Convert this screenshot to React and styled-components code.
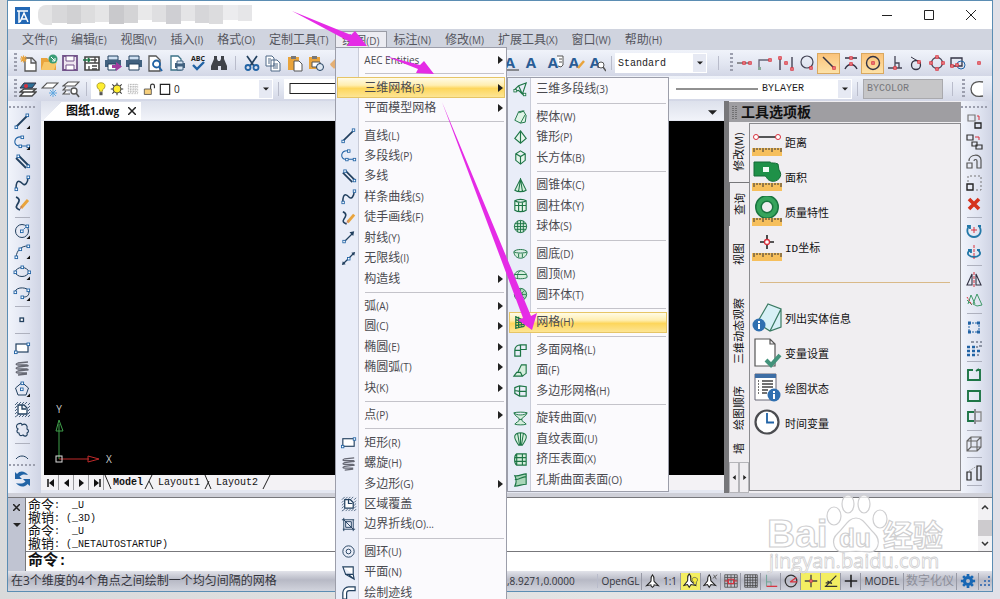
import styled, { createGlobalStyle, css } from "styled-components";

const GlobalStyle = createGlobalStyle`
  * {
    box-sizing: border-box;
  }

  body {
    margin: 0;
    overflow: hidden;
    background: #dcdee2;
    font-family: "Open Sans", "Noto Sans CJK SC", sans-serif;
    font-size: 12px;
    color: #4a4a50;
  }

  button,
  select,
  input {
    font: inherit;
    color: inherit;
    margin: 0;
    padding: 0;
    border: 0;
    background: none;
    border-radius: 0;
  }

  svg {
    display: block;
  }
`;

const mono = '"Liberation Mono", "Noto Sans CJK SC", monospace';
const bar = "linear-gradient(#f0f3fa, #e3e7f2 50%, #d3d7e6)";

const Page = styled.div`
  position: relative;
  height: 100vh;
  overflow: hidden;
  padding: 0 7px 7px;
  background: linear-gradient(90deg, #d9dadb, #e3e4e4 60%, #e1e1e8);
`;

const Window = styled.main`
  display: flex;
  flex-direction: column;
  height: 100%;
  border: 1px solid #5b8db3;
  background: #e4e7f1;
`;

/* title bar */

const TitleBar = styled.header`
  display: flex;
  align-items: center;
  height: 28px;
  flex: none;
  padding-left: 7px;
  background: #fff;
`;

const Mosaic = styled.div`
  display: flex;
  height: 20px;
  width: 214px;
  margin-left: 8px;
  border-radius: 8px 0 0 8px;
  overflow: hidden;
`;

const MosaicCell = styled.span`
  flex: 1;
  height: ${(p) => p.$h}px;
  background: ${(p) => p.$tone};
`;

const WindowButtons = styled.div`
  display: flex;
  margin-left: auto;
`;

const WindowButton = styled.button`
  display: grid;
  place-items: center;
  width: 42px;
  height: 28px;
`;

/* menu bar */

const MenuBar = styled.nav`
  display: flex;
  height: 21px;
  flex: none;
  padding: 2px 0 0 7px;
  background: #d0d4df;
`;

const MenuSlot = styled.div`
  position: relative;
`;

const MenuTitle = styled.button`
  display: block;
  height: 18px;
  padding: 0 7px;
  line-height: 16px;
  white-space: nowrap;
  color: #55565e;

  ${(p) =>
    p.$open &&
    css`
      padding: 0 6px;
      border: 1px solid #9a9ca6;
      border-bottom: 0;
      background: #ececf2;
      line-height: 13px;
    `}
`;

const Key = styled.span`
  font-size: 10px;
`;

const Menu = styled.div`
  position: absolute;
  z-index: 10;
  top: ${(p) => p.$top}px;
  left: ${(p) => p.$left}px;
  width: ${(p) => p.$width}px;
  height: ${(p) => p.$height}px;
  display: flex;
  flex-direction: column;
  padding: ${(p) => p.$pad}px 1px 1px;
  border: 1px solid #9c9eaa;
  background: linear-gradient(90deg, #e9edf8 22px, #c9ccd8 22px, #c9ccd8 23px, #fbfafd 23px);
`;

const MenuRow = styled.button`
  flex: 1 1 0;
  min-height: 0;
  display: flex;
  align-items: center;
  width: 100%;
  text-align: left;
  white-space: nowrap;
  line-height: 16px;
  border: 1px solid transparent;

  ${(p) =>
    p.$active &&
    css`
      border-color: #e6c566;
      background: linear-gradient(#fffbe6, #ffeeb0 38%, #fdd65c 55%, #fde594);
    `}
`;

const MenuIcon = styled.span`
  display: grid;
  place-items: center;
  flex: none;
  width: 20px;
  margin-right: 6px;
`;

const MenuLabel = styled.span`
  flex: 1;
`;

const MenuLine = styled.hr`
  flex: none;
  align-self: stretch;
  height: 1px;
  margin: 3px 1px 3px 28px;
  border: 0;
  background: #c4c3ca;
`;

/* tool bars */

const ToolBar = styled.div`
  display: flex;
  align-items: center;
  flex: none;
  height: ${(p) => p.$height}px;
  padding: 0 3px 0 6px;
  background: ${bar};
`;

const Grip = styled.span`
  flex: none;
  width: 3px;
  height: 20px;
  background: repeating-linear-gradient(#9c9fae 0 2px, transparent 2px 4px);
`;

const GripTop = styled.span`
  flex: none;
  width: 26px;
  height: 2px;
  margin: 5px 0 3px;
  background: repeating-linear-gradient(90deg, #9c9fae 0 2px, transparent 2px 4px);
`;

const IconGroup = styled.div`
  display: flex;
  flex: none;
  width: ${(p) => p.$width}px;
  height: 21px;
`;

const ToolButton = styled.button`
  display: grid;
  place-items: center;
  flex: 1 1 0;
  min-width: 0;
  min-height: 0;
  overflow: hidden;

  ${(p) =>
    p.$active &&
    css`
      border: 1px solid #d9a860;
      background: linear-gradient(#fbc37a, #fde2a8);
    `}
`;

const Divider = styled.span`
  flex: none;
  width: 1px;
  height: 14px;
  margin: 0 ${(p) => p.$gap || 5}px;
  background: #b9bccb;
`;

const Spacer = styled.span`
  flex: 1;
`;

const Combo = styled.div`
  display: flex;
  align-items: center;
  flex: none;
  height: 20px;
  width: ${(p) => p.$width}px;
  padding-left: 3px;
  gap: 2px;
  background: ${(p) => (p.$off ? "#c6c6c8" : "#fff")};
  border: ${(p) => (p.$off ? "1px solid #a9a9ad" : "0")};
  color: ${(p) => (p.$off ? "#77777b" : "#1c1c1c")};
`;

const Select = styled.select`
  appearance: none;
  flex: 1;
  min-width: 0;
  height: 18px;
  font-family: ${(p) => (p.$plain ? "inherit" : mono)};
  font-size: 10px;
  opacity: 1;
  outline: 0;
`;

const ComboArrow = styled.span`
  display: grid;
  place-items: center;
  width: 13px;
  height: 18px;
  margin-right: 1px;
  background: #e6e9f3;
`;

/* middle area */

const Work = styled.div`
  display: flex;
  flex: 1;
  min-height: 0;
`;

const SideBar = styled.div`
  display: flex;
  flex-direction: column;
  align-items: center;
  flex: none;
  width: ${(p) => p.$width}px;
  padding-bottom: 4px;
  padding-right: ${(p) => p.$right}px;
  background: linear-gradient(90deg, #f1f4fb, #dfe3f0 60%, #cfd4e4);
`;

const SideList = styled.div`
  display: flex;
  flex-direction: column;
  flex: ${(p) => (p.$fixed ? "none" : "1")};
  width: 22px;
  height: ${(p) => (p.$fixed ? "20px" : "auto")};
  min-height: 0;
`;

const SideLine = styled.hr`
  flex: none;
  width: 15px;
  height: 1px;
  margin: 3px auto;
  border: 0;
  background: #aeb1be;
`;

const Peek = styled.div`
  display: flex;
  flex: none;
  height: 12px;
  overflow: hidden;
`;

const Drawing = styled.section`
  display: flex;
  flex-direction: column;
  flex: 1;
  min-width: 0;
`;

const DocTabs = styled.div`
  display: flex;
  align-items: flex-end;
  justify-content: space-between;
  flex: none;
  height: 19px;
  padding: 0 5px 0 2px;
  background: linear-gradient(#dde1ec, #f1f3f9);
`;

const DocTab = styled.div`
  display: flex;
  align-items: center;
  gap: 6px;
  height: 18px;
  padding: 0 2px 0 23px;
  background: linear-gradient(#fff, #fff) 18px 0 / 100% 100% no-repeat,
    linear-gradient(to bottom right, transparent 50%, #fff 51%) 0 0 / 18px 100% no-repeat;
  font-weight: 700;
  color: #111;
  line-height: 16px;
`;

const DropButton = styled.button`
  display: grid;
  place-items: center;
  width: 14px;
  height: 16px;
`;

const Canvas = styled.div`
  flex: 1;
  display: flex;
  align-items: flex-end;
  min-height: 0;
  margin-top: 1px;
  padding: 0 0 5px 8px;
  border-left: 3px solid #f4f5f8;
  background: #000;
`;

const SheetBar = styled.div`
  display: flex;
  align-items: stretch;
  flex: none;
  height: 15px;
  margin-bottom: 3px;
  padding-left: 3px;
  background: #f3f2f5;
  font-family: ${mono};
  font-size: 10px;
  color: #111;
`;

const SheetNav = styled.button`
  display: grid;
  place-items: center;
  width: 15px;
  border-right: 1px solid #9b9b9f;
`;

const Sheet = styled.button`
  line-height: 14px;
  padding: 0 ${(p) => (p.$bold ? 1 : 2)}px;
  font-weight: ${(p) => (p.$bold ? 700 : 400)};
`;

/* tool palette */

const Palette = styled.aside`
  display: flex;
  flex-direction: column;
  flex: none;
  width: 237px;
  border-left: 5px solid #77777a;
  background: #f0eef1;
`;

const PaletteHead = styled.h2`
  display: flex;
  align-items: center;
  gap: 4px;
  flex: none;
  height: 20px;
  margin: 1px 0 0;
  padding-left: 3px;
  background: #9f9ea2;
  font-size: 14px;
  line-height: 18px;
  font-weight: 700;
  color: #111;
`;

const PaletteBody = styled.div`
  display: flex;
  flex: 1;
  min-height: 0;
`;

const TabColumn = styled.div`
  display: flex;
  flex-direction: column;
  flex: none;
  width: 20px;
`;

const SideTab = styled.button`
  flex: ${(p) => p.$grow} 1 0;
  min-height: 0;
  overflow: hidden;
  display: flex;
  align-items: center;
  justify-content: center;
  writing-mode: vertical-rl;
  text-orientation: sideways;
  transform: rotate(180deg);
  white-space: nowrap;
  font-size: 11px;
  line-height: 18px;
  color: #111;

  ${(p) =>
    p.$current &&
    css`
      border-right: 1px solid #77777a;
      border-bottom: 1px solid #77777a;
    `}
`;

const TabScroll = styled.div`
  display: flex;
  flex: none;
  height: 31px;
`;

const TabScrollButton = styled.button`
  display: grid;
  place-items: center;
  flex: 1;
  border: 1px solid #b5b5b9;
`;

const ToolList = styled.div`
  flex: 1;
  margin: 1px 0 2px;
  padding: 0 0 0 2px;
  border: 1px solid #8b8b8f;
`;

const ToolItem = styled.button`
  display: flex;
  align-items: center;
  gap: 2px;
  width: 100%;
  height: 35px;
  text-align: left;
  font-family: ${mono};
  font-size: 11px;
  color: #111;
`;

const ToolRule = styled.hr`
  height: 1px;
  margin: 18px 10px 17px 8px;
  border: 0;
  background: #d9b988;
`;

/* command line */

const Splitter = styled.div`
  flex: none;
  height: 5px;
  background: #cfd0d8;
  border-bottom: 1px solid #77777b;
`;

const Command = styled.section`
  display: flex;
  flex: none;
  height: 73px;
`;

const CommandSide = styled.div`
  display: flex;
  flex-direction: column;
  align-items: center;
  gap: 2px;
  width: 18px;
  padding-top: 1px;
  background: #c0c4d2;
  border-right: 1px solid #77777b;
`;

const CommandMain = styled.div`
  display: flex;
  flex-direction: column;
  flex: 1;
  background: #fff;
  color: #111;
`;

const History = styled.div`
  display: flex;
  justify-content: space-between;
  height: 54px;
  border-bottom: 1px solid #77777b;
`;

const Log = styled.div`
  padding: 1px 0 0 2px;
  font-family: ${mono};
  font-size: 10px;
`;

const LogLine = styled.div`
  display: flex;
  align-items: center;
  height: 13px;
  line-height: 13px;
  white-space: pre;
`;

const LogWord = styled.span`
  font-size: 13px;
`;

const ScrollTrack = styled.div`
  display: flex;
  flex-direction: column;
  align-items: center;
  justify-content: space-between;
  width: 14px;
  padding: 7px 0 5px;
  background: #f2f1f3;
`;

const Thumb = styled.span`
  width: 14px;
  height: 16px;
  margin-top: 4px;
  background: #cdcbce;
`;

const Prompt = styled.label`
  display: flex;
  align-items: center;
  flex: 1;
  padding-left: 2px;
  font-family: ${mono};
  font-size: 15px;
  line-height: 18px;
  font-weight: 700;
`;

const CommandInput = styled.input`
  flex: 1;
  height: 16px;
  margin-left: 4px;
  outline: 0;
`;

/* status bar */

const Status = styled.footer`
  display: flex;
  align-items: center;
  flex: none;
  height: 20px;
  padding-left: 3px;
  background: linear-gradient(#e2e3ea, #b7b9c5 45%, #d2d4dd);
  white-space: nowrap;
  line-height: 18px;
  color: #33343c;
`;

const StatusCell = styled.button`
  display: flex;
  align-items: center;
  justify-content: center;
  gap: 3px;
  flex: none;
  width: ${(p) => p.$width}px;
  height: 17px;
  border-right: 1px solid #9799a5;
  font-size: ${(p) => (p.$muted ? 12 : 10)}px;
  color: ${(p) => (p.$muted ? "#8d8f9a" : "inherit")};
  background: ${(p) => (p.$lit ? "#f3ee62" : "none")};
`;

const Coords = styled.span`
  width: 88px;
  font-size: 10px;
`;

const Arrows = styled.svg`
  position: absolute;
  z-index: 20;
  top: 0;
  left: 0;
  pointer-events: none;
`;

const Watermark = styled.svg`
  position: absolute;
  z-index: 5;
  right: 50px;
  bottom: 16px;
  pointer-events: none;
`;

/* drawings */

const N = "#22405f";
const B = "#2163a5";
const G = "#1d7546";
const R = "#d8303c";
const O = "#e9a43c";

const sq = (x, y, c = B) => (
  <rect x={x - 1} y={y - 1} width="2.6" height="2.6" fill="#fff" stroke={c} strokeWidth="0.9" />
);

const dot = (x, y) => <rect x={x - 1.2} y={y - 1.2} width="2.4" height="2.4" fill="#f5b0b0" stroke={R} />;

const corner = <path d="M17 13.500v3.500h-3.500z" fill="#111" stroke="none" />;

const art = {
  line: <>{<path d="M3 15L14 4" stroke={N} strokeWidth="1.8" />}{sq(3, 15)}{sq(14, 3)}</>,
  pline: <>{<path d="M9 4C0 3 0 13 6 13h9" stroke={B} strokeWidth="1.1" />}{sq(9, 4)}{sq(7, 13)}{sq(15, 13)}</>,
  mline: <>{<path d="M3 5l10 10M6 3l10 10" stroke={N} strokeWidth="1.8" />}{sq(5, 3)}{sq(15, 13)}</>,
  spline: <>{<path d="M3 15C3 3 8 8 10 10s5-1 5-7" stroke={N} strokeWidth="1.6" />}{sq(3, 15)}{sq(15, 3)}</>,
  sketch: <>{<path d="M3 3c5 2 3 5 1 8s1 4 3 5" stroke={N} strokeWidth="1.7" />}{<path d="M8 14l7-8" stroke={O} strokeWidth="3" />}{<path d="M7 15l2-3" stroke="#b77" />}</>,
  ray: <>{<path d="M5 13l8-8" stroke={N} strokeWidth="1.3" />}{<path d="M10 3.500l5-1-1 5z" fill={N} />}{sq(4, 13)}</>,
  xline: <>{<path d="M4 14L14 4" stroke={N} strokeWidth="1.3" />}{<path d="M2 16l1-4 3 3zM16 2l-1 4-3-3z" fill={N} />}{sq(9, 9)}</>,
  circle: <>{<circle cx="9" cy="9" r="6.500" stroke={N} />}{<path d="M9 9l5-5" stroke={B} strokeDasharray="2 1" />}{sq(8.500, 9)}{sq(14, 4)}</>,
  arc: <>{<path d="M3 15C4 8 8 4 15 4" stroke={N} />}{sq(3, 15)}{sq(7, 7)}{sq(15, 4)}</>,
  ellipse: <>{<ellipse cx="9" cy="9" rx="6.500" ry="4.500" stroke={N} />}{sq(2, 9)}{sq(16, 9)}{sq(9, 4)}</>,
  earc: <>{<path d="M2 8C3 2 16 3 16 8s-4 5-6 5" stroke={N} />}{sq(2, 8)}{sq(15, 6)}{sq(9, 13)}</>,
  point: <rect x="7" y="7" width="3.500" height="3.500" stroke={N} fill="#fff" strokeWidth="1.300" />,
  rect: <>{<rect x="3" y="5" width="12" height="8" fill="#fff" stroke={N} strokeWidth="1.200" />}{sq(2.500, 13)}{sq(15, 5)}</>,
  helix: <path d="M15 3L5 4c-3 1-2 2 0 2l9 0c2 1 1 1-1 1L5 8c-3 1-2 2 0 2h9c2 1 1 1-1 1L5 12c-3 1-2 2 0 2h9M14 15l-9 1" stroke="#666873" strokeWidth="1.300" />,
  polygon: <>{<path d="M9 2.500L15.500 8 13 15H5L2.500 8z" stroke={N} />}{sq(8.500, 9)}{sq(9, 3)}</>,
  region: <>{<path d="M5 5h6l3 3v6H5zM9 5v4h4" fill="#fff" stroke={N} strokeWidth="1.300" />}{<path d="M2 5l3-3M6 4l2-2M9 4l2-2M12 4l2-2M15 5l2-2M2 8l2-2M2 11l2-2M2 14l2-2M2 17l3-2M6 17l2-2M9 17l2-2M12 17l2-2M15 8l2-2M15 11l2-2M15 14l2-2M15 17l2-2" stroke={N} strokeWidth="0.800" />}</>,
  cloud: <path d="M5 3c2-1 4-1 4 1 3-2 6 0 5 4 2 1 2 3 0 4 1 3-2 4-4 2-2 1-4 1-4-2-2 0-3-2-1-4-2-1-2-4 0-5z" stroke={N} strokeWidth="1.100" />,
  arcPeek: <path d="M3 12c3-4 9-4 12 0" stroke={N} />,
  refresh: <path d="M2 2l0 7h7L6.500 6.500C9 4 12 4 15 5 12 1 7 0 4 4zM17 16V9h-7l2.500 2.500C10 14 6 14 3 13c3 4 8 5 11.500 1z" fill={B} />,
  boundary: <path d="M2 4h13M4 2v14M14 4v12M3 14h13M6 6h6v6H6zM4 4l10 10" stroke={N} />,
  donut: <>{<circle cx="9" cy="9" r="6" stroke={N} />}{<circle cx="9" cy="9" r="2.500" stroke={N} />}</>,
  plane: <path d="M3 3h11v8H6zM3 3l3 8 9 5-1-5M9 11l6 5" stroke={N} fill="#fff" strokeWidth="1.200" />,
  trace: <path d="M3 16V9c0-3 3-6 6-6h7v4h-6c-2 0-3 1-3 3v6z" stroke={N} fill="#fff" strokeWidth="1.300" />,

  poly3d: <>{<path d="M3 9l4-4 8-3-4 12-4-4-4 1M7 5l4 9" stroke={G} strokeWidth="1.200" />}{sq(3, 10, G)}{sq(13, 14, G)}</>,
  wedge: <path d="M3 13l4-9 5-1 3 5-1 7-5 1zM7 4l1 1 5-2M9 16l5-9" stroke={G} fill="#dff3e6" />,
  pyramid: <path d="M9 2l6 8-6 5-6-5zM9 2v13" stroke={G} fill="#e6f5eb" strokeWidth="1.200" />,
  box: <path d="M9 2l5 3v7l-5 4-5-4V5zM4 5l5 3 5-3M9 8v8" stroke={G} fill="#e6f5eb" strokeWidth="1.200" />,
  cone: <path d="M9 2L3 14c3 2 9 2 12 0zM9 2L7 15M9 2l2 13" stroke={G} fill="#d5eedd" strokeWidth="1.100" />,
  cylinder: <path d="M3 4c3-2 9-2 12 0v10c-3 2-9 2-12 0zM3 4c3 2 9 2 12 0M7 5v10M11 5v10M3 9h12" stroke={G} fill="#e6f5eb" strokeWidth="1.200" />,
  sphere: <>{<circle cx="9" cy="9" r="6.500" stroke={G} fill="#cfe9d8" />}{<path d="M3 6h12M2.500 9h13M3 12h12M6 3v12M9 2.500v13M12 3v12" stroke={G} />}</>,
  dish: <path d="M2 7c2-3 12-3 14 0 0 4-3 7-7 7S2 11 2 7zM2 7c2 2 12 2 14 0M7 9l0 4M11 9v4" stroke={G} fill="#d5eedd" />,
  dome: <path d="M2 12c0-4 3-7 7-7s7 3 7 7c-2 2-12 2-14 0zM9 5c-4 3-3 5-3 8M3 9h12" stroke={G} fill="#d5eedd" />,
  torus: <>{<circle cx="9" cy="9" r="6.500" stroke={G} fill="#a9d6b9" />}{<circle cx="9" cy="9" r="2" stroke={G} />}{<path d="M3 9h12M9 3v12M5 5l8 8M13 5l-8 8" stroke={G} strokeWidth="0.800" />}</>,
  mesh: <path d="M4 2v14M7 3v12M10 5v9M13 7v6M4 3l9 4M4 6l9 3M4 9h11M4 12l10-1M4 15l9-2" stroke={G} strokeWidth="1.300" />,
  pface: <path d="M3 10h6v6H3zM3 10c0-4 3-6 6-6h6v5H9M9 4v6" stroke={G} strokeWidth="1.300" />,
  face: <path d="M2 15l3-4h4l2 4zM6 11l4-8h5v9l-4 3" stroke={G} fill="#d5eedd" strokeWidth="1.200" />,
  pmesh: <path d="M3 6l5-2 7 1v10l-7 0-5-3zM8 4v11M3 9l5 1h7" stroke={G} strokeWidth="1.300" />,
  revsurf: <path d="M2 3c3-1 11-1 14 0-1 4-6 5-6 7s4 3 5 5c-2 1-10 1-12 0 1-2 5-3 5-5S3 7 2 3zM2 3c3 3 11 3 14 0M7 10h4" stroke={G} fill="#d5eedd" />,
  ruled: <path d="M3 6c2-4 10-4 12 0 1 4-3 8-4 10H7C6 14 2 10 3 6zM6 4l2 12M9 3v13M12 4l-2 12" stroke={G} fill="#d5eedd" strokeWidth="1.100" />,
  tab: <path d="M5 3h10v12H5c-3-2-3-10 0-12zM5 3v12M11 3v12M3 7h12M3 11h12" stroke={G} fill="#d5eedd" strokeWidth="1.200" />,
  coons: <path d="M3 5c4 1 8-2 12-2v11c-4 0-8 2-12 2 2-4 2-7 0-11zM3 9c4 1 7-3 12-3" stroke={G} fill="#a9d6b9" strokeWidth="1.200" />,

  fresh: <>{<path d="M6 4h7l4 4v9H6zM12 4v5h5" fill="#fff" stroke="#555" strokeWidth="1.300" />}{<path d="M1 5h7M4.500 1.500v7M2 2.500l5 5M7 2.500l-5 5" stroke={O} strokeWidth="1.200" />}</>,
  open: <>{<path d="M1 4h6l2 2h7v10H1z" fill={O} />}{<path d="M1 16l3-8h13l-3 8z" fill="#f7c769" />}{<circle cx="13" cy="5" r="4.500" fill="#3b9d77" />}{<path d="M11 3l4 4m0-3v3h-3" stroke="#fff" />}</>,
  save: <>{<path d="M2 2h14v14H2z" fill="#eee6f0" stroke="#73538a" strokeWidth="1.800" />}{<path d="M5 2h8v5H5zM5 11h8v5H5z" fill="#fff" stroke="#73538a" />}</>,
  grid: <>{<path d="M2 3h14v13H2z" fill="#fff" stroke="#444" strokeWidth="1.600" />}{<path d="M8 6h6M2 9h14M6 12v4M9 12h5M9 15h5M12 3v6" stroke="#444" strokeWidth="1.300" />}{<path d="M0 6h7M5 4l2 2-2 2" stroke={G} strokeWidth="1.500" />}</>,
  print: <>{<path d="M4 2h10v4H4z" fill="#cfe0f2" stroke={N} />}{<path d="M1 6h16v7H1z" fill="#41617f" />}{<path d="M4 10h10v6H4z" fill="#fff" stroke={N} />}</>,
  publish: <>{<path d="M4 2h10v4H4z" fill="#cfe0f2" stroke={N} />}{<path d="M1 6h16v7H1z" fill="#41617f" />}{<path d="M4 10h8v6H4z" fill="#fff" stroke={N} />}{<path d="M8 11h4V8l6 4.500-6 4.500v-3H8z" fill="#a33c9f" />}</>,
  preview: <>{<path d="M3 2h7l4 4v11H3z" fill="#fff" stroke="#555" strokeWidth="1.300" />}{<circle cx="10.500" cy="10" r="3.500" fill="#fff" stroke={B} strokeWidth="1.800" />}{<path d="M13 13l3 4" stroke={B} strokeWidth="2" />}</>,
  plot: <>{<path d="M3 2h7l3 3v11H3z" fill="#fff" stroke="#3b7187" strokeWidth="1.300" />}{<path d="M7 9h10v5H7z" fill="#41617f" />}{<path d="M9 7h6v3H9zM9 12h6v4H9z" fill="#d8e6f3" stroke="#41617f" />}</>,
  check: <path d="M4 11l4 4 7-7" stroke={B} strokeWidth="2.400" />,
  find: <path d="M4 2h3v3l1 2h2l1-2V2h3v3l3 7v4h-6v-4H9h-1v4H1v-4l3-7z" fill="#3f4248" />,
  cut: <>{<path d="M4 2l7 10M14 2L7 12" stroke={N} strokeWidth="1.700" />}{<circle cx="5" cy="13.500" r="2.500" stroke={B} strokeWidth="1.800" />}{<circle cx="13" cy="13.500" r="2.500" stroke={B} strokeWidth="1.800" />}</>,
  copy: <path d="M2 2h6l2 2v8H2zM7 6h6l3 3v8H7zM9 10h5M9 12h5M9 14h5M4 5h3M4 7h2M4 9h2" fill="#fff" stroke="#4e6986" />,
  paste: <>{<path d="M2 3h11v13H2z" fill={O} />}{<path d="M5 2h5v3H5z" fill="#777" />}{<path d="M8 7h5l3 3v7H8z" fill="#fff" stroke="#555" />}</>,
  pasteSpecial: <>{<path d="M2 3h11v12H2z" fill={O} />}{<path d="M5 2h5v3H5z" fill="#777" />}{<path d="M5 8h8v5H5z" fill="#fff" stroke="#555" />}{<circle cx="13" cy="13" r="3.500" fill="#dfe8f2" stroke={N} />}</>,
  brush: <path d="M2 10l6-6 4 4-6 7c-1-2-3-2-4-5z" fill="#e5b074" />,
  layers: <>{<path d="M5 9h12l-4 3H1zM5 12h12l-4 4H1z" fill="#fff" stroke="#444" strokeWidth="1.300" />}{<path d="M5 3h12l-4 5H1z" fill="#2d6f96" stroke="#334" />}{<circle cx="7" cy="6" r="2" fill={R} />}</>,
  layerNew: <>{<path d="M6 3h11l-5 5H1z" fill="#fff" stroke="#555" strokeWidth="1.200" />}{<path d="M12 9v8M8 13h8M9 10l6 6M15 10l-6 6" stroke="#62a8e0" />}</>,
  layerFind: <>{<path d="M6 2h11l-4 4H1zM4 7l-3 3h7M4 11l-3 3h7" fill="#fff" stroke="#555" strokeWidth="1.200" />}{<circle cx="12" cy="11" r="3" fill="#fff" stroke="#555" strokeWidth="1.400" />}{<path d="M14 13l3 4" stroke="#555" strokeWidth="1.600" />}</>,
  bulb: <>{<path d="M9 1c-7 0-6 7-2 9v2h4v-2c4-2 5-9-2-9z" fill="#ffee30" stroke="#9b8d20" />}{<path d="M7 13h4v4H7z" fill="#555" />}</>,
  sun: <>{<path d="M9 1v16M1 9h16M3 3l12 12M15 3L3 15" stroke="#333" strokeWidth="1.300" />}{<circle cx="9" cy="9" r="5" fill="#ffee30" stroke="#444" strokeWidth="1.300" />}</>,
  freeze: <path d="M3 3h12v12H3zM3 6h12M3 9h12M3 12h12M6 3v12M9 3v12M12 3v12" stroke="#999" strokeDasharray="1 1" />,
  lock: <>{<path d="M11 9V5c0-3 5-3 5 0v3" stroke="#333" strokeWidth="1.500" />}{<path d="M3 9h9v7H3z" fill="#f6cf7c" stroke="#444" />}</>,
  swatch: <path d="M3 3h12v13H3z" fill="#fff" stroke="#222" strokeWidth="1.500" />,

  s1: <>{<path d="M2 9h12" stroke="#555" strokeWidth="1.200" />}{dot(9, 9)}{dot(15, 9)}</>,
  s2: <>{<path d="M3 15V6h10" stroke="#667" strokeWidth="1.300" />}{<rect x="2" y="13" width="3" height="3" fill="#8a9" />}{dot(14, 6)}</>,
  s3: <>{<path d="M3 3v13M15 3v13" stroke="#445" strokeWidth="1.400" />}{dot(3, 4)}{dot(9, 9)}{dot(15, 15)}</>,
  s4: <>{<circle cx="9" cy="8" r="6" stroke="#445" strokeWidth="1.200" />}{dot(13, 14)}</>,
  s5: <>{<path d="M3 3l11 11" stroke="#334" strokeWidth="1.500" />}{dot(14, 14)}</>,
  s6: <>{<path d="M3 4h12M3 15c3-6 9-6 12 0" stroke="#334" strokeWidth="1.400" />}{dot(9, 4)}{dot(9, 10)}</>,
  s7: <>{<circle cx="9" cy="9" r="6.500" stroke="#334" strokeWidth="1.400" />}{dot(9, 9)}</>,
  s8: <>{<path d="M2 14h14M9 2v12M9 9h4v5" stroke="#445" strokeWidth="1.300" />}{dot(9, 14)}</>,
  s9: <>{<circle cx="9" cy="11" r="4.500" stroke="#334" strokeWidth="1.300" />}{<path d="M4 3l10 6" stroke="#334" />}{dot(12, 8)}</>,
  s10: <>{<circle cx="9" cy="9" r="5.500" stroke="#445" strokeWidth="1.300" />}{dot(9, 3)}{dot(9, 15)}{dot(3, 9)}{dot(15, 9)}</>,
  s11: <>{<path d="M2 4h11v8H2z" stroke="#334" strokeWidth="1.300" />}{<circle cx="12" cy="11" r="4" stroke={B} />}{dot(3, 12)}{dot(8, 11)}</>,
  s12: dot(9, 9),
  bigC: <path d="M15 2C6 0 3 5 3 9s3 9 12 7" fill="#fff" stroke="#555" strokeWidth="1.300" />,

  m1: <>{<path d="M3 3h7v6H3z" stroke="#777" strokeWidth="1.200" />}{<path d="M10 11h6v5h-6z" stroke="#222" strokeWidth="1.300" />}{<path d="M12 4h2v4" stroke={R} />}</>,
  m2: <>{<path d="M2 2h6v5H2zM7 9h5v4H7zM11 12h6v4h-6z" stroke="#333" strokeWidth="1.200" />}{<path d="M10 4h4v3" stroke={R} />}</>,
  m3: <path d="M2 15h5v-5H2zM4 8c0-7 12-8 12-1v8h-4V8c0-2-3-2-3 0" stroke="#555" strokeWidth="1.200" />,
  m4: <>{<path d="M3 8V2h13v14h-6" stroke="#777" strokeDasharray="2 2" />}{<path d="M2 10h6v6H2z" stroke="#222" strokeWidth="1.400" />}</>,
  m5: <path d="M4 4l10 10M14 4L4 14" stroke="#d5331c" strokeWidth="3.600" />,
  m6: <>{<path d="M4 4C0 10 4 15 9 15s9-5 5-11M2 4h3v3M16 4h-3" stroke="#2378a8" strokeWidth="1.800" />}{<path d="M6 8h6M9 5v6" stroke={R} />}</>,
  m7: <>{<path d="M5 7c-5 4 0 7 4 7s9-3 4-7M3 7h3v3M15 7h-3" stroke="#2378a8" strokeWidth="1.800" />}{<path d="M9 2v14" stroke={R} strokeDasharray="3 1" />}</>,
  m8: <>{<path d="M7 4v11H2zM11 4v11h5z" stroke="#334" strokeWidth="1.100" />}{<path d="M9 2v15" stroke={R} strokeDasharray="3 1" />}</>,
  m9: <>{<path d="M3 13l3-9 4 9M8 13l4-10 5 11-5 1zM2 9l5 5" stroke="#3f9a68" />}{<path d="M2 6l5 8" stroke={R} strokeDasharray="2 1" />}</>,
  m10: <>{<path d="M4 5h10v9H4z" stroke={B} strokeDasharray="2 1" />}{<path d="M3 5h3M12 5h3M3 14h3M12 14h3" stroke={B} strokeWidth="3" />}</>,
  m11: <>{<path d="M2 8h3M7 8h3M2 12h3M7 12h3M12 12h3M2 16h3M7 16h3" stroke={B} strokeWidth="2.600" />}{<path d="M6 3h3M11 3h2M15 3h2M14 7h3M11 8h2M12 16h2" stroke="#8f96a6" strokeWidth="2" />}</>,
  m12: <path d="M8 4H3v10h12V4h-3M11 5l3-2" stroke={G} strokeWidth="1.900" />,
  m13: <path d="M3 4h12v10H3z" stroke={G} strokeWidth="1.900" />,
  m14: <>{<path d="M9 4H3v9h6" stroke={G} strokeWidth="1.900" />}{<path d="M11 4h5v9h-5" stroke="#888" strokeWidth="1.300" />}{<path d="M10 1v15" stroke="#333" />}</>,
  m15: <path d="M2 6h10v10H2zM6 2h10v10H6zM2 6l4-4M12 6l4-4M2 16l4-4M12 16l4-4" stroke="#666" strokeWidth="1.100" />,
  m16: <>{<path d="M2 9h4v8H2zM12 3h4v14h-4z" stroke="#222" strokeWidth="1.200" />}{<path d="M4 8l8-5" stroke="#888" strokeDasharray="1 1" />}</>,

  st1: <path d="M9 1c3 3 1 6 2 8l5 5-5-1c0 2 0 2-2 3-2-1-2-1-2-3l-5 1 5-5c1-2-1-5 2-8z" fill="#fff" stroke="#222" strokeWidth="1.300" />,
  st2: <>{<path d="M7 1c3 3 1 6 2 8l5 5-5-1-2 3-2-3-4 1 4-5c1-2-1-5 2-8z" fill="#fff" stroke="#222" strokeWidth="1.200" />}{<path d="M13 5c-4 0-3 4-1 5v3h3v-3c2-1 2-5-2-5z" fill="#f8ec3a" stroke="#665" />}</>,
  st3: <>{<path d="M7 2c3 3 1 5 2 7l5 5-5-1-2 3-2-3-4 1 4-5c1-2-1-4 2-7z" fill="#fff" stroke="#222" strokeWidth="1.200" />}{<path d="M11 6l5-4M12 2l3 5" stroke="#555" />}</>,
  st4: <>{<path d="M2 2h14v14H2zM2 5h14M2 8h14M2 12h14M5 2v14M9 2v14M13 2v14" stroke="#555" strokeWidth="1" />}{<path d="M6 7h6v5H6zM2 9h4M12 9h4" stroke={R} strokeWidth="1.300" />}</>,
  st5: <path d="M2 2h14v14H2zM2 5h14M2 8h14M2 11h14M2 14h14M5 2v14M8 2v14M11 2v14M14 2v14" stroke="#444" strokeWidth="0.900" />,
  st6: <>{<path d="M4 2v13M4 10h5v5" stroke="#6aa392" />}{<path d="M4 15h12" stroke={R} strokeWidth="1.400" />}</>,
  st7: <>{<circle cx="9" cy="9" r="6.500" stroke="#333" strokeWidth="1.400" />}{<path d="M8 10l7-5M8 10h8" stroke={R} strokeWidth="1.400" />}</>,
  st8: <>{<path d="M9 2v14M2 9h14" stroke="#444" strokeWidth="1.500" />}{dot(9, 9)}</>,
  st9: <path d="M2 15h14M3 15L15 3M5 9l5 3M3 11h7" stroke="#333" strokeWidth="1.400" />,
  st10: <path d="M9 2v14M2 9h14" stroke="#222" strokeWidth="1.800" />,
  gear: <>{<circle cx="9" cy="9" r="4" stroke="#1767b4" strokeWidth="3.500" />}{<path d="M9 1v3M9 14v3M1 9h3M14 9h3M3.500 3.500l2 2M12.500 12.500l2 2M14.500 3.500l-2 2M5.500 12.500l-2 2" stroke="#1767b4" strokeWidth="3" />}</>,
};

const Icon = ({ name, size = 18, more }) => (
  <svg width={size} height={size} viewBox="0 0 18 18" fill="none" aria-hidden="true">
    {art[name]}
    {more && corner}
    {name === "check" && (
      <text x="9" y="7" fontSize="7" fontWeight="700" textAnchor="middle" fill="#222">
        ABC
      </text>
    )}
  </svg>
);

const letterMarks = {
  a1: <path d="M2 16h14" stroke="#333" />,
  a2: null,
  a3: <path d="M11 2h6v9l-2 2-3-1M13 5h3M13 8h3" fill="#fff" stroke="#555" />,
  a4: <path d="M11 14l6-7" stroke={O} strokeWidth="2.500" />,
  a5: <><circle cx="13" cy="11" r="3" fill="#fff" stroke="#555" /><path d="M15 13l3 4" stroke="#555" strokeWidth="1.600" /></>,
};

const LetterIcon = ({ name }) => (
  <svg width="18" height="18" viewBox="0 0 18 18" fill="none" aria-hidden="true">
    <text x="7" y="14" fontSize="15" fontWeight="700" textAnchor="middle" fill="#295c95">
      A
    </text>
    {letterMarks[name]}
  </svg>
);

const Triangle = ({ dir = "down", size = 8 }) => (
  <svg width={size} height={size} viewBox="0 0 8 8" aria-hidden="true">
    <path d={{ down: "M0 2h8L4 6z", right: "M2 0l5 4-5 4z", left: "M6 0L1 4l5 4z" }[dir]} fill="#222" />
  </svg>
);

const Ruler = () => (
  <g>
    <rect x="0" y="22" width="30" height="8" fill="#f6bf5c" />
    <path d="M2 22v4M5 22v2M8 22v2M11 22v4M14 22v2M17 22v2M20 22v4M23 22v2M26 22v2M29 22v4" stroke="#333" />
  </g>
);

const Info = ({ x, y }) => (
  <g>
    <circle cx={x} cy={y} r="6.500" fill="#2f6fb0" />
    <path d={`M${x} ${y - 4}v2M${x} ${y - 1}v5`} stroke="#fff" strokeWidth="2" />
  </g>
);

const bigArt = {
  distance: <><path d="M4 11h22" stroke="#222" strokeWidth="1.500" /><circle cx="4" cy="11" r="2.500" fill="#fff" stroke={R} /><circle cx="26" cy="11" r="2.500" fill="#fff" stroke={R} /><Ruler /></>,
  area: <><path d="M2 1h16c2 2 4 0 8 2l1 6c5 6-2 13-8 11-4-1-4-4-6-5H2z" fill="#1f9148" stroke="#156b36" /><path d="M11 6h6v5h-6z" fill="#f2fbf5" /><Ruler /></>,
  mass: <><circle cx="15" cy="11" r="8.500" stroke="#1a7640" strokeWidth="7" /><circle cx="15" cy="11" r="8.500" stroke="#36a45c" strokeWidth="4" /><Ruler /></>,
  idpoint: <><path d="M15 4v14M8 11h14" stroke="#222" strokeWidth="1.600" /><circle cx="15" cy="11" r="2.500" fill="#fff" stroke={R} strokeWidth="1.300" /><Ruler /></>,
  list: <><path d="M5 21L16 2l13 5v18l-11 4zM16 2l13 5L18 29" fill="#d7f0f6" stroke="#3a7a62" strokeWidth="1.200" /><Info x={7} y={23} /></>,
  vars: <><path d="M3 2h15l5 5v22H3zM18 2v5h5" fill="#fff" stroke="#555" strokeWidth="1.200" /><path d="M14 23l5 5 9-10" stroke="#43937b" strokeWidth="4" /></>,
  state: <><path d="M3 2h21v26H3z" fill="#fff" stroke="#667" /><path d="M3 2h21v4H3z" fill="#3e6ea5" /><path d="M6 9h1M6 12h1M6 15h1M6 18h1M6 21h1M10 9h11M10 12h11M10 15h11M10 18h6M10 21h5" stroke="#444" strokeWidth="1.300" /><Info x={22} y={23} /></>,
  clock: <><circle cx="15" cy="15" r="11.500" fill="#fff" stroke="#4b4c50" strokeWidth="2.200" /><path d="M15 6v9.500h7" stroke={B} strokeWidth="1.800" /></>,
};

const BigIcon = ({ name }) => (
  <svg width="31" height="31" viewBox="0 0 31 31" fill="none" aria-hidden="true">
    {bigArt[name]}
  </svg>
);

/* content */

const mosaic = [
  ["#e3e3e4", 20], ["#d8d8da", 18], ["#d1d1d3", 19], ["#ddddde", 18], ["#e5e5e6", 17],
  ["#c9c9cc", 19], ["#d4d4d6", 18], ["#e9e9ea", 15], ["#dfdfe1", 17], ["#cfcfd3", 19],
  ["#e4e4e6", 16], ["#d6d6d9", 18], ["#dcdcde", 19], ["#ececee", 15], ["#e6e6e8", 16],
];

const menus = [
  ["文件", "F"], ["编辑", "E"], ["视图", "V"], ["插入", "I"], ["格式", "O"], ["定制工具", "T"],
  ["绘图", "D"], ["标注", "N"], ["修改", "M"], ["扩展工具", "X"], ["窗口", "W"], ["帮助", "H"],
];

// [label, key, icon, has submenu], null is a separator
const drawMenu = [
  ["", "AEC Entities", null, true],
  null,
  ["三维网格", "(3)", null, true],
  ["平面模型网格", "", null, true],
  null,
  ["直线", "(L)", "line"],
  ["多段线", "(P)", "pline"],
  ["多线", "", "mline"],
  ["样条曲线", "(S)", "spline"],
  ["徒手画线", "(F)", "sketch"],
  ["射线", "(Y)", "ray"],
  ["无限线", "(I)", "xline"],
  ["构造线", "", null, true],
  null,
  ["弧", "(A)", null, true],
  ["圆", "(C)", null, true],
  ["椭圆", "(E)", null, true],
  ["椭圆弧", "(T)", null, true],
  ["块", "(K)", null, true],
  null,
  ["点", "(P)", null, true],
  null,
  ["矩形", "(R)", "rect"],
  ["螺旋", "(H)", "helix"],
  ["多边形", "(G)", null, true],
  ["区域覆盖", "", "region"],
  ["边界折线", "(O)...", "boundary"],
  null,
  ["圆环", "(U)", "donut"],
  ["平面", "(N)", "plane"],
  ["绘制迹线", "", "trace"],
];

const meshMenu = [
  ["三维多段线", "(3)", "poly3d"],
  null,
  ["楔体", "(W)", "wedge"],
  ["锥形", "(P)", "pyramid"],
  ["长方体", "(B)", "box"],
  null,
  ["圆锥体", "(C)", "cone"],
  ["圆柱体", "(Y)", "cylinder"],
  ["球体", "(S)", "sphere"],
  null,
  ["圆底", "(D)", "dish"],
  ["圆顶", "(M)", "dome"],
  ["圆环体", "(T)", "torus"],
  null,
  ["网格", "(H)", "mesh"],
  null,
  ["多面网格", "(L)", "pface"],
  ["面", "(F)", "face"],
  ["多边形网格", "(H)", "pmesh"],
  null,
  ["旋转曲面", "(V)", "revsurf"],
  ["直纹表面", "(U)", "ruled"],
  ["挤压表面", "(X)", "tab"],
  ["孔斯曲面表面", "(O)", "coons"],
];

const fileTools = ["fresh", "open", "save", "grid", "publish", "print", "preview", "plot", "check", "find"];
const editTools = ["cut", "copy", "paste", "pasteSpecial", "brush"];
const snapTools = ["s1", "s2", "s3", "s4", "s5", "s6", "s7", "s8", "s9", "s10", "s11", "s12"];
const drawTools = [
  "line+", "pline+", "mline", "spline", "sketch", null, "circle+", "arc+", "ellipse+", "earc+", null,
  "point", null, "rect", "helix", "polygon+", "region", "cloud", null,
];
const modifyTools = [
  "m1", "m2", "m3", "m4", "m5", null, "m6", "m7", null, "m8", "m9", null, "m10", "m11", null,
  "m12", "m13", "m14", null, "m15", null, "m16", null,
];

const paletteTabs = [
  ["修改(M)", 60], ["查询", 43], ["视图", 56], ["三维动态观察", 98], ["绘图顺序", 56], ["墙", 26],
];

const paletteTools = [
  ["distance", "距离"], ["area", "面积"], ["mass", "质量特性"], ["idpoint", "ID坐标"], null,
  ["list", "列出实体信息"], ["vars", "变量设置"], ["state", "绘图状态"], ["clock", "时间变量"],
];

const log = [["命令", ":  _U"], ["撤销", ": (_3D)"], ["命令", ":  _U"], ["撤销", ": (_NETAUTOSTARTUP)"]];

const statusTools = [
  ["st2", true], ["st3"], ["st4"], ["st5"], ["st6"], ["st7"], ["st8", true], ["st9", true], ["st10"],
];

const MenuRows = ({ items, active }) =>
  items.map((item, i) =>
    item ? (
      <MenuRow key={i} role="menuitem" $active={item[0] === active}>
        <MenuIcon>{item[2] && <Icon name={item[2]} size={17} />}</MenuIcon>
        <MenuLabel>
          {item[0]}
          <Key>{item[1]}</Key>
        </MenuLabel>
        {item[3] && <Triangle dir="right" />}
      </MenuRow>
    ) : (
      <MenuLine key={i} />
    )
  );

const Tools = ({ names, active = [] }) =>
  names.map((name, i) =>
    name ? (
      <ToolButton key={i} aria-label={name} $active={active.includes(name)}>
        <Icon name={name.replace("+", "")} more={name.endsWith("+")} />
      </ToolButton>
    ) : (
      <SideLine key={i} />
    )
  );

const App = () => {
  return (
    <Page>
      <GlobalStyle />
      <Window>
        <TitleBar>
          <svg width="15" height="17" viewBox="0 0 15 17" aria-hidden="true">
            <rect width="15" height="17" fill="#2368b5" />
            <path d="M2 4h11M4 4v12M5 15l4-9 4 9M7 12h4" stroke="#fff" strokeWidth="1.500" fill="none" />
          </svg>
          <Mosaic>
            {mosaic.map(([tone, h], i) => (
              <MosaicCell key={i} $tone={tone} $h={h} />
            ))}
          </Mosaic>
          <WindowButtons>
            <WindowButton aria-label="最小化">
              <svg width="10" height="10"><path d="M0 5.500h10" stroke="#222" /></svg>
            </WindowButton>
            <WindowButton aria-label="最大化">
              <svg width="10" height="10"><path d="M0.500 0.500h9v9h-9z" stroke="#222" fill="none" /></svg>
            </WindowButton>
            <WindowButton aria-label="关闭">
              <svg width="10" height="10"><path d="M0 0l10 10M10 0L0 10" stroke="#222" /></svg>
            </WindowButton>
          </WindowButtons>
        </TitleBar>

        <MenuBar>
          {menus.map(([label, key]) => (
            <MenuSlot key={key}>
              <MenuTitle $open={key === "D"}>
                {label}
                <Key>({key})</Key>
              </MenuTitle>
              {key === "D" && (
                <Menu role="menu" $top={16} $left={0} $width={172} $height={558} $pad={2}>
                  <MenuRows items={drawMenu} active="三维网格" />
                  <Menu role="menu" $top={29} $left={171} $width={162} $height={415} $pad={1}>
                    <MenuRows items={meshMenu} active="网格" />
                  </Menu>
                </Menu>
              )}
            </MenuSlot>
          ))}
        </MenuBar>

        <ToolBar $height={26}>
          <Grip />
          <IconGroup $width={213}>
            <Tools names={fileTools} />
          </IconGroup>
          <Divider />
          <IconGroup $width={107}>
            <Tools names={editTools} />
          </IconGroup>
          <Spacer />
          <IconGroup $width={107}>
            {Object.keys(letterMarks).map((name) => (
              <ToolButton key={name} aria-label={name}>
                <LetterIcon name={name} />
              </ToolButton>
            ))}
          </IconGroup>
          <Divider $gap={3} />
          <Combo $width={92}>
            <Select aria-label="文字样式">
              <option>Standard</option>
            </Select>
            <ComboArrow><Triangle size={6} /></ComboArrow>
          </Combo>
          <Divider $gap={11} />
          <Grip />
          <IconGroup $width={256}>
            <Tools names={snapTools} active={["s5", "s7"]} />
          </IconGroup>
        </ToolBar>

        <ToolBar $height={25}>
          <Grip />
          <IconGroup $width={65}>
            <Tools names={["layers", "layerNew", "layerFind"]} />
          </IconGroup>
          <Divider $gap={4} />
          <Combo $width={182}>
            <Icon name="bulb" size={14} />
            <Icon name="sun" size={14} />
            <Icon name="freeze" size={14} />
            <Icon name="lock" size={14} />
            <Icon name="swatch" size={14} />
            <Select $plain aria-label="图层">
              <option>0</option>
            </Select>
            <ComboArrow><Triangle size={6} /></ComboArrow>
          </Combo>
          <Divider />
          <Combo $width={210}>
            <svg width="60" height="12" aria-hidden="true">
              <rect x="3" y="0.500" width="56" height="10" fill="#fff" stroke="#222" />
            </svg>
          </Combo>
          <Spacer />
          <Combo $width={190}>
            <svg width="95" height="2" aria-hidden="true"><path d="M11 1h82" stroke="#222" /></svg>
            <Select aria-label="线型">
              <option>BYLAYER</option>
            </Select>
            <ComboArrow><Triangle size={6} /></ComboArrow>
          </Combo>
          <Divider />
          <Combo $width={80} $off>
            <Select aria-label="打印样式" disabled>
              <option>BYCOLOR</option>
            </Select>
          </Combo>
          <Divider $gap={9} />
          <Grip />
          <IconGroup $width={24}>
            <Tools names={["bigC"]} />
          </IconGroup>
        </ToolBar>

        <Work>
          <SideBar $width={33} $right={5}>
            <GripTop />
            <SideList>
              <Tools names={drawTools} />
              <Peek>
                <Tools names={["arcPeek"]} />
              </Peek>
            </SideList>
            <GripTop />
            <SideList $fixed>
              <Tools names={["refresh"]} />
            </SideList>
          </SideBar>

          <Drawing>
            <DocTabs>
              <DocTab>
                <span>
                  图纸<Key>1.dwg</Key>
                </span>
                <DropButton aria-label="关闭图纸">
                  <svg width="8" height="8"><path d="M0 0l8 8M8 0L0 8" stroke="#222" strokeWidth="1.500" /></svg>
                </DropButton>
              </DocTab>
              <DropButton aria-label="图纸列表"><Triangle size={9} /></DropButton>
            </DocTabs>
            <Canvas>
              <svg width="64" height="72" viewBox="0 -6 64 72" fill="none">
                <path d="M7 55V20M4 27l3-11 4 11z" stroke="#3fa04a" />
                <path d="M7 55h30M36 52l11 3-11 3z" stroke="#c02a2a" />
                <rect x="4" y="52" width="6" height="6" stroke="#ddd" />
                <text x="7" y="9" fill="#ccc" fontSize="10" textAnchor="middle">Y</text>
                <text x="57" y="59" fill="#ccc" fontSize="10" textAnchor="middle">X</text>
              </svg>
            </Canvas>
            <SheetBar>
              {["first", "prev", "next", "last"].map((way, i) => (
                <SheetNav key={way} aria-label={way}>
                  <svg width="9" height="8" viewBox="0 0 9 8">
                    <path d={i < 2 ? "M7 0L2 4l5 4z" : "M2 0l5 4-5 4z"} fill="#111" />
                    {i === 0 && <path d="M1 0v8" stroke="#111" strokeWidth="1.500" />}
                    {i === 3 && <path d="M8 0v8" stroke="#111" strokeWidth="1.500" />}
                  </svg>
                </SheetNav>
              ))}
              <svg width="8" height="15"><path d="M1 0l6 14" stroke="#222" /></svg>
              <Sheet $bold>Model</Sheet>
              <svg width="12" height="15"><path d="M1 14L8 0M5 6l4 8" stroke="#222" fill="none" /></svg>
              <Sheet>Layout1</Sheet>
              <svg width="12" height="15"><path d="M3 0l6 14M3 14l4-8" stroke="#222" fill="none" /></svg>
              <Sheet>Layout2</Sheet>
              <svg width="12" height="15"><path d="M3 14L10 0" stroke="#222" /></svg>
            </SheetBar>
          </Drawing>

          <Palette>
            <PaletteHead>
              <svg width="5" height="13" aria-hidden="true">
                <path d="M1 0v13M4 0v13" stroke="#444" strokeDasharray="1 1" />
              </svg>
              工具选项板
            </PaletteHead>
            <PaletteBody>
              <TabColumn>
                {paletteTabs.map(([label, grow], i) => (
                  <SideTab key={label} $grow={grow} $current={i === 1}>
                    {label}
                  </SideTab>
                ))}
                <TabScroll>
                  <TabScrollButton aria-label="上一页"><Triangle dir="left" size={5} /></TabScrollButton>
                  <TabScrollButton aria-label="下一页"><Triangle dir="right" size={5} /></TabScrollButton>
                </TabScroll>
              </TabColumn>
              <ToolList>
                {paletteTools.map((tool) =>
                  tool ? (
                    <ToolItem key={tool[0]}>
                      <BigIcon name={tool[0]} />
                      {tool[1]}
                    </ToolItem>
                  ) : (
                    <ToolRule key="rule" />
                  )
                )}
              </ToolList>
            </PaletteBody>
          </Palette>

          <SideBar $width={31} $right={5}>
            <GripTop />
            <SideList>
              <Tools names={modifyTools} />
            </SideList>
          </SideBar>
        </Work>

        <Splitter />

        <Command>
          <CommandSide>
            <DropButton aria-label="关闭命令行">
              <svg width="7" height="7"><path d="M0 0l7 7M7 0L0 7" stroke="#222" strokeWidth="1.500" /></svg>
            </DropButton>
            <DropButton aria-label="命令行选项"><Triangle /></DropButton>
          </CommandSide>
          <CommandMain>
            <History>
              <Log>
                {log.map(([word, rest], i) => (
                  <LogLine key={i}>
                    <LogWord>{word}</LogWord>
                    {rest}
                  </LogLine>
                ))}
              </Log>
              <ScrollTrack>
                <svg width="8" height="5"><path d="M1 4l3-3 3 3" stroke="#333" strokeWidth="1.500" fill="none" /></svg>
                <Thumb />
                <svg width="8" height="5"><path d="M1 1l3 3 3-3" stroke="#333" strokeWidth="1.500" fill="none" /></svg>
              </ScrollTrack>
            </History>
            <Prompt>
              命令:
              <CommandInput />
            </Prompt>
          </CommandMain>
        </Command>

        <Status>
          <span>在3个维度的4个角点之间绘制一个均匀间隔的网格</span>
          <Spacer />
          <Coords>,8.9271,0.0000</Coords>
          <Divider $gap={2} />
          <StatusCell $width={42}>OpenGL</StatusCell>
          <StatusCell $width={39}>
            <Icon name="st1" size={15} />
            1:1
          </StatusCell>
          {statusTools.map(([name, lit]) => (
            <StatusCell key={name} $width={20} $lit={lit} aria-label={name}>
              <Icon name={name} size={16} />
            </StatusCell>
          ))}
          <StatusCell $width={43}>MODEL</StatusCell>
          <StatusCell $width={53} $muted>数字化仪</StatusCell>
          <StatusCell $width={22} aria-label="设置">
            <Icon name="gear" size={16} />
          </StatusCell>
          <svg width="13" height="12" aria-hidden="true">
            <path d="M9 2h2M5 6h2M9 6h2M1 10h2M5 10h2M9 10h2" stroke="#4a78b5" strokeWidth="2" />
          </svg>
        </Status>
      </Window>

      <Watermark width="184" height="96" viewBox="0 0 184 96">
        <g fill="#fff" fillOpacity="0.75" stroke="#cfcfd1" strokeWidth="1.200" fontFamily="Liberation Sans" fontWeight="700">
          <text x="1" y="60" fontSize="39">Bai</text>
          <ellipse cx="68" cy="29" rx="7" ry="9" />
          <ellipse cx="82" cy="17" rx="6" ry="9" />
          <ellipse cx="98" cy="17" rx="6" ry="9" />
          <ellipse cx="114" cy="32" rx="7" ry="9" />
          <path d="M90 31c-8 0-11 9-18 15-9 8-3 20 6 19 8-1 16-1 24 0 10 1 14-11 6-19-7-6-10-15-18-15z" />
          <text x="73" y="60" fontSize="26">du</text>
          <text x="117" y="59" fontSize="30" fontFamily="Noto Sans CJK SC">经验</text>
          <text x="3" y="81" fontSize="20" fontFamily="Open Sans" fontWeight="400" strokeWidth="0.800">
            jingyan.baidu.com
          </text>
        </g>
      </Watermark>

      <Arrows width="560" height="340" viewBox="0 0 560 340" fill="#e52be6">
        <path d="M292 11l59 24 4-4 12 15-20 0 3-4z" />
        <path d="M385 56l35 9 4-4 10 13-18-1 2-4z" />
        <path d="M442 102l89 214 6-3-5 17-14-10 5-2z" />
      </Arrows>
    </Page>
  );
};

export default App;
